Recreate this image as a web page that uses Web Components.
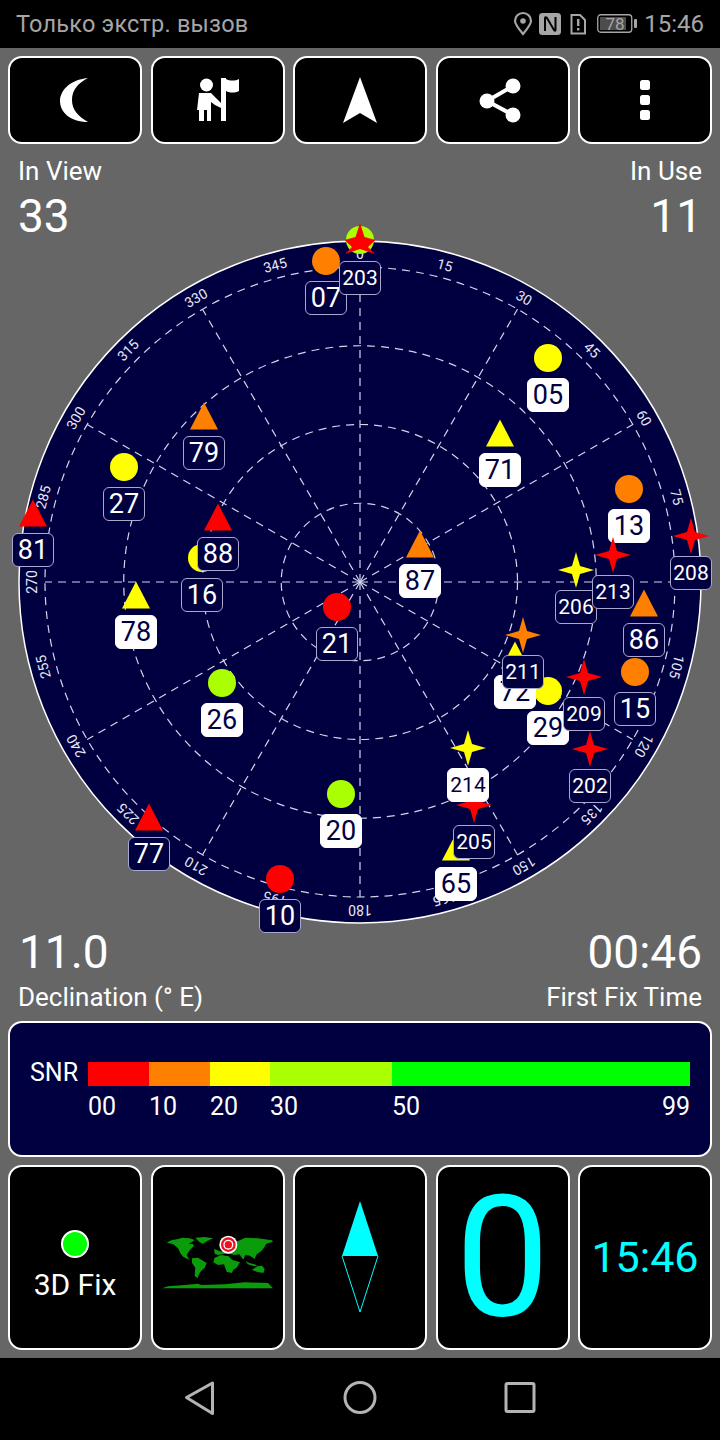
<!DOCTYPE html>
<html>
<head>
<meta charset="utf-8">
<title>GPS Test</title>
<style>
    html, body { margin: 0; padding: 0; background: #666; }
    body { width: 720px; height: 1440px; overflow: hidden; display: flex; flex-direction: column; font-family: Roboto, "Noto Sans", sans-serif; color: #fff; }
</style>
</head>
<body>
<status-bar></status-bar>
<tool-bar>
    <tool-button>
        <svg viewBox="0 0 134 88"><path fill="#fff" d="M80 22C60 24 52 36 52 45C52 56 62 66 80 66C70 60 64 54 64 44C64 34 70 27 80 22Z"/></svg>
    </tool-button>
    <tool-button>
        <svg viewBox="0 0 134 88"><circle cx="55.5" cy="29" r="6.5" fill="#fff"/><path fill="#fff" d="M48 37H60L66 43L70 47V52L64 49L60 46V65H56V54H53V65H48V54H46Z"/><path fill="#fff" d="M70 22H75V65H70ZM75 23C79 25 84 25 88 23V35C84 37 79 37 75 35Z"/></svg>
    </tool-button>
    <tool-button>
        <svg viewBox="0 0 134 88"><path fill="#fff" d="M67 21L84 67L67 57L50 67Z"/></svg>
    </tool-button>
    <tool-button>
        <svg viewBox="0 0 134 88"><path stroke="#fff" stroke-width="4" fill="none" d="M77 30L51 45L77 59"/><circle cx="51" cy="45" r="7.5" fill="#fff"/><circle cx="77" cy="30" r="7.5" fill="#fff"/><circle cx="77" cy="59" r="7.5" fill="#fff"/></svg>
    </tool-button>
    <tool-button>
        <svg viewBox="0 0 134 88"><rect x="62" y="24" width="10" height="10" rx="2.5" fill="#fff"/><rect x="62" y="39" width="10" height="10" rx="2.5" fill="#fff"/><rect x="62" y="54" width="10" height="10" rx="2.5" fill="#fff"/></svg>
    </tool-button>
</tool-bar>
<stat-row mode="top">
    <stat-block label="In View" value="33"></stat-block>
    <stat-block label="In Use" value="11" align="right"></stat-block>
</stat-row>
<sky-plot>
    <sat-marker shape="circle" color="#aaff00" x="360" y="0"></sat-marker>
    <sat-marker shape="circle" color="#ff8000" x="326" y="21" num="07"></sat-marker>
    <sat-marker shape="circle" color="#ffff00" x="548" y="118" num="05" used></sat-marker>
    <sat-marker shape="circle" color="#ffff00" x="124" y="227" num="27"></sat-marker>
    <sat-marker shape="circle" color="#ff8000" x="629" y="249" num="13" used></sat-marker>
    <sat-marker shape="circle" color="#ffff00" x="202" y="318" num="16"></sat-marker>
    <sat-marker shape="circle" color="#ff0000" x="337" y="367" num="21"></sat-marker>
    <sat-marker shape="circle" color="#aaff00" x="222" y="443" num="26" used></sat-marker>
    <sat-marker shape="circle" color="#ff8000" x="635" y="432" num="15"></sat-marker>
    <sat-marker shape="circle" color="#ffff00" x="548" y="451" num="29" used></sat-marker>
    <sat-marker shape="circle" color="#aaff00" x="341" y="554" num="20" used></sat-marker>
    <sat-marker shape="circle" color="#ff0000" x="280" y="639" num="10"></sat-marker>
    <sat-marker shape="triangle" color="#ff8000" x="204" y="176" num="79"></sat-marker>
    <sat-marker shape="triangle" color="#ff0000" x="33" y="273" num="81"></sat-marker>
    <sat-marker shape="triangle" color="#ff0000" x="218" y="277" num="88"></sat-marker>
    <sat-marker shape="triangle" color="#ffff00" x="136" y="355" num="78" used></sat-marker>
    <sat-marker shape="triangle" color="#ff0000" x="149" y="577" num="77"></sat-marker>
    <sat-marker shape="triangle" color="#ffff00" x="500" y="193" num="71" used></sat-marker>
    <sat-marker shape="triangle" color="#ff8000" x="420" y="304" num="87" used></sat-marker>
    <sat-marker shape="triangle" color="#ff8000" x="644" y="363" num="86"></sat-marker>
    <sat-marker shape="triangle" color="#ffff00" x="515" y="415" num="72" used></sat-marker>
    <sat-marker shape="triangle" color="#ffff00" x="456" y="607" num="65" used></sat-marker>
    <sat-marker shape="star4" color="#ff0000" x="691" y="296" num="208"></sat-marker>
    <sat-marker shape="star4" color="#ffff00" x="576" y="330" num="206"></sat-marker>
    <sat-marker shape="star4" color="#ff0000" x="613" y="315" num="213"></sat-marker>
    <sat-marker shape="star4" color="#ff8000" x="523" y="395" num="211"></sat-marker>
    <sat-marker shape="star4" color="#ff0000" x="584" y="437" num="209"></sat-marker>
    <sat-marker shape="star4" color="#ff0000" x="590" y="509" num="202"></sat-marker>
    <sat-marker shape="star4" color="#ff0000" x="474" y="565" num="205"></sat-marker>
    <sat-marker shape="star4" color="#ffff00" x="468" y="508" num="214" used></sat-marker>
    <sat-marker shape="star5" color="#ff0000" x="360" y="1" num="203"></sat-marker>
</sky-plot>
<stat-row mode="bottom">
    <stat-block label="Declination (° E)" value="11.0" flip></stat-block>
    <stat-block label="First Fix Time" value="00:46" align="right" flip></stat-block>
</stat-row>
<snr-legend></snr-legend>
<tile-row>
    <info-tile>
        <fix-status label="3D Fix"></fix-status>
    </info-tile>
    <info-tile>
        <svg width="120" height="66" viewBox="0 0 360 198" style="margin-top:8px">
            <g fill="#0a9c0a">
                <path d="M14 32L28 40L40 34L60 30L72 26L95 28L110 33L100 40L92 46L104 44L108 52L98 60L92 68L86 78L94 92L84 88L76 84L68 74L60 58L46 46L30 42Z"/>
                <path d="M112 26L140 24L165 28L148 36L135 44L125 40Z"/>
                <path d="M102 88L120 86L146 102L140 116L126 130L118 148L110 140L112 116L102 102Z"/>
                <path d="M170 86L190 78L212 82L222 92L246 100L236 116L226 122L222 132L206 128L198 106L180 108L166 100Z"/>
                <path d="M168 60L190 68L205 40L240 36L262 26L300 28L342 34L345 38L325 44L318 56L310 66L296 76L290 90L276 80L262 78L256 92L244 76L230 78L220 76L200 74L180 78L170 74Z"/>
                <path d="M282 122L298 112L312 110L320 120L316 132L296 128Z"/>
                <path d="M262 96L274 102L290 106L300 112L284 110L270 106Z"/>
                <path d="M12 178L30 172L80 168L120 164L130 168L200 166L260 160L330 162L345 178Z"/>
            </g>
            <circle cx="211" cy="47" r="27" fill="#fff"/>
            <circle cx="211" cy="47" r="22" fill="#f01020"/>
            <circle cx="211" cy="47" r="15" fill="#fff"/>
            <circle cx="211" cy="47" r="11" fill="#f01020"/>
        </svg>
    </info-tile>
    <info-tile>
        <svg width="38" height="114" viewBox="0 0 38 114" style="margin-top:-2px">
            <path fill="#00ffff" d="M19 1L37 56H1Z"/>
            <path fill="none" stroke="#00ffff" stroke-width="1" d="M1 56L19 112L37 56"/>
        </svg>
    </info-tile>
    <info-tile size="168"><span>0</span></info-tile>
    <info-tile size="43"><span>15:46</span></info-tile>
</tile-row>
<nav-bar></nav-bar>

<script>
class StatusBar extends HTMLElement {
    constructor() {
        super();
        this.attachShadow({ mode: 'open' });
        this.shadowRoot.innerHTML = `
            <style>
                :host { display: flex; align-items: center; height: 48px; background: #000; color: #a6a6a6; padding: 0 16px; box-sizing: border-box; flex: none; }
                .carrier { font-size: 23.5px; flex: 1; letter-spacing: 0.2px; }
                svg { display: block; }
                .time { font-size: 24px; margin-left: 6px; }
            </style>
            <span class="carrier">Только экстр. вызов</span>
            <svg width="22" height="26" viewBox="0 0 22 26" style="margin-right:5px">
                <path fill="none" stroke="#a6a6a6" stroke-width="2.2" d="M11 23C6 17 3 13 3 10A8 8 0 0 1 19 10C19 13 16 17 11 23Z"/>
                <circle cx="11" cy="10" r="2.8" fill="#a6a6a6"/>
            </svg>
            <svg width="22" height="22" viewBox="0 0 22 22" style="margin-right:8px">
                <rect width="22" height="22" rx="3.5" fill="#a6a6a6"/>
                <path fill="none" stroke="#000" stroke-width="2" d="M6 18V5C6 4 7 4 8 5L15 17C16 18 16.500 18 16.500 17V4"/>
            </svg>
            <svg width="17" height="21" viewBox="0 0 17 21" style="margin-right:11px">
                <path fill="none" stroke="#a6a6a6" stroke-width="2" d="M2.500 1H11L16 6V19.500H2.500Z"/>
                <rect x="8" y="5" width="2.400" height="7" fill="#a6a6a6"/><rect x="8" y="14" width="2.400" height="2.500" fill="#a6a6a6"/>
            </svg>
            <svg width="41" height="20" viewBox="0 0 41 20">
                <rect x=".75" y=".75" width="34" height="17.5" rx="3" fill="none" stroke="#a6a6a6" stroke-width="1.300"/>
                <rect x="3" y="3" width="26" height="13" fill="#4c4c4c"/>
                <rect x="37" y="5" width="3" height="9" rx="1" fill="#a6a6a6"/>
                <text x="18" y="15.500" font-size="17" text-anchor="middle" fill="#a6a6a6" font-family="Roboto">78</text>
            </svg>
            <span class="time">15:46</span>
        `;
    }
}

class ToolBar extends HTMLElement {
    constructor() {
        super();
        this.attachShadow({ mode: 'open' });
        this.shadowRoot.innerHTML = `
            <style>
                :host { display: grid; grid-template-columns: repeat(5, 134px); justify-content: space-between; padding: 8px 8px 0; flex: none; }
            </style>
            <slot></slot>
        `;
    }
}

class ToolButton extends HTMLElement {
    constructor() {
        super();
        this.attachShadow({ mode: 'open' });
        this.shadowRoot.innerHTML = `
            <style>
                :host { display: block; height: 88px; background: #000; border: 2px solid #fff; border-radius: 14px; box-sizing: border-box; overflow: hidden; }
                ::slotted(svg) { display: block; width: 134px; height: 88px; margin: -2px; }
            </style>
            <slot></slot>
        `;
    }
}

class StatRow extends HTMLElement {
    constructor() {
        super();
        this.attachShadow({ mode: 'open' });
        const bottom = this.getAttribute('mode') === 'bottom';
        this.shadowRoot.innerHTML = `
            <style>
                :host { display: flex; justify-content: space-between; padding: 0 18px; box-sizing: border-box; flex: none; height: ${bottom ? 97 : 96}px; padding-top: ${bottom ? 0 : 10}px; position: relative; z-index: 1; }
            </style>
            <slot></slot>
        `;
    }
}

class StatBlock extends HTMLElement {
    constructor() {
        super();
        this.attachShadow({ mode: 'open' });
        const right = this.getAttribute('align') === 'right';
        const flip = this.hasAttribute('flip');
        this.shadowRoot.innerHTML = `
            <style>
                :host { display: flex; flex-direction: ${flip ? 'column-reverse' : 'column'}; justify-content: ${flip ? 'flex-end' : 'flex-start'}; text-align: ${right ? 'right' : 'left'}; }
                .label { font-size: 26px; line-height: 34px; }
                .value { font-size: 46px; line-height: 56px; ${flip ? 'margin-left:1px;' : ''} }
            </style>
            <div class="label">${this.getAttribute('label')}</div>
            <div class="value">${this.getAttribute('value')}</div>
        `;
    }
}

class SkyPlot extends HTMLElement {
    constructor() {
        super();
        this.attachShadow({ mode: 'open' });
        const cx = 360, cy = 342;
        let grid = '';
        for (const r of [315, 236.25, 157.5, 78.75]) {
            grid += `<circle cx="${cx}" cy="${cy}" r="${r}" fill="none" class="dash"/>`;
        }
        for (let a = 0; a < 360; a += 30) {
            const t = a * Math.PI / 180;
            grid += `<line x1="${cx}" y1="${cy}" x2="${cx + 315 * Math.sin(t)}" y2="${cy - 315 * Math.cos(t)}" class="dash"/>`;
        }
        let ticks = '';
        for (let a = 0; a < 360; a += 15) {
            const t = a * Math.PI / 180;
            const x = cx + 328 * Math.sin(t);
            const y = cy - 328 * Math.cos(t);
            ticks += `<text x="${x}" y="${y}" transform="rotate(${a} ${x} ${y})" text-anchor="middle" dominant-baseline="central">${a}</text>`;
        }
        this.shadowRoot.innerHTML = `
            <style>
                :host { display: block; position: relative; width: 720px; height: 684px; flex: none; }
                svg { display: block; position: absolute; left: 0; top: 0; overflow: visible; }
                .dash { stroke: #d4d4ec; stroke-width: 1.2; stroke-dasharray: 8 6; }
                text { fill: #e8e8f4; font: 14px Roboto, sans-serif; }
            </style>
            <svg width="720" height="684">
                <circle cx="${cx}" cy="${cy}" r="341" fill="#000040" stroke="#fff" stroke-width="1.5"/>
                ${grid}
                ${ticks}
            </svg>
            <slot></slot>
        `;
    }
}

const SAT_SHAPES = {
    circle: (c) => `<circle r="14" fill="${c}"/>`,
    triangle: (c) => `<path d="M0 -13.500L14 13.500H-14Z" fill="${c}"/>`,
    star4: (c) => `<path d="M0 -18L4 -4L18 0L4 4L0 18L-4 4L-18 0L-4 -4Z" fill="${c}"/>`,
    star5: (c) => `<path d="M0 -18L4.500 -4L15.500 -1L8 6L15 13L0 8L-15 13L-8 6L-15.500 -1L-4.500 -4Z" fill="${c}"/>`
};

class SatMarker extends HTMLElement {
    constructor() {
        super();
        this.attachShadow({ mode: 'open' });
        const num = this.getAttribute('num');
        const used = this.hasAttribute('used');
        const shape = SAT_SHAPES[this.getAttribute('shape')](this.getAttribute('color'));
        this.shadowRoot.innerHTML = `
            <style>
                :host { display: block; position: absolute; left: ${this.getAttribute('x')}px; top: ${this.getAttribute('y')}px; width: 0; height: 0; }
                svg { position: absolute; left: -20px; top: -20px; }
                .label { position: absolute; left: -21px; top: 20px; width: 42px; height: 34px; box-sizing: border-box; display: flex; align-items: center; justify-content: center; border-radius: 6px; border: 1px solid ${used ? '#fff' : '#a9a9cf'}; background: ${used ? '#fff' : '#000040'}; color: ${used ? '#000040' : '#fff'}; font-size: ${num && num.length > 2 ? 21 : 27}px; }
            </style>
            <svg width="40" height="40" viewBox="-20 -20 40 40">${shape}</svg>
            ${num ? `<div class="label">${num}</div>` : ''}
        `;
    }
}

class SnrLegend extends HTMLElement {
    constructor() {
        super();
        this.attachShadow({ mode: 'open' });
        const bands = [
            ['#ff0000', 61, '00'], ['#ff8000', 61, '10'], ['#ffff00', 60, '20'],
            ['#aaff00', 122, '30'], ['#00ff00', 298, '50']
        ];
        this.shadowRoot.innerHTML = `
            <style>
                :host { display: flex; margin: 0 8px; height: 136px; box-sizing: border-box; background: #000040; border: 2px solid #fff; border-radius: 14px; padding: 32px 20px 0; flex: none; }
                .name { font-size: 25px; width: 58px; line-height: 36px; }
                .scale { width: 602px; }
                .bar { display: flex; height: 24px; margin-top: 7px; }
                .bar div { height: 100%; }
                .nums { display: flex; font-size: 25px; line-height: 42px; }
                .nums span { display: block; }
                .nums .last { flex: 1; }
                .end { margin-left: auto; }
            </style>
            <span class="name">SNR</span>
            <div class="scale">
                <div class="bar">${bands.map(b => `<div style="background:${b[0]};width:${b[1]}px"></div>`).join('')}</div>
                <div class="nums">
                    ${bands.slice(0, 4).map(b => `<span style="width:${b[1]}px">${b[2]}</span>`).join('')}
                    <span>50</span><span class="end">99</span>
                </div>
            </div>
        `;
    }
}

class TileRow extends HTMLElement {
    constructor() {
        super();
        this.attachShadow({ mode: 'open' });
        this.shadowRoot.innerHTML = `
            <style>
                :host { display: grid; grid-template-columns: repeat(5, 134px); justify-content: space-between; padding: 8px 8px 0; flex: none; }
            </style>
            <slot></slot>
        `;
    }
}

class InfoTile extends HTMLElement {
    constructor() {
        super();
        this.attachShadow({ mode: 'open' });
        this.shadowRoot.innerHTML = `
            <style>
                :host { display: flex; align-items: center; justify-content: center; height: 185px; background: #000; border: 2px solid #fff; border-radius: 14px; box-sizing: border-box; color: #00ffff; font-size: ${this.getAttribute('size') || 30}px; line-height: 1; overflow: hidden; }
            </style>
            <slot></slot>
        `;
    }
}

class FixStatus extends HTMLElement {
    constructor() {
        super();
        this.attachShadow({ mode: 'open' });
        this.shadowRoot.innerHTML = `
            <style>
                :host { display: flex; flex-direction: column; align-items: center; gap: 9px; color: #fff; font-size: 30px; line-height: 36px; margin-top: 18px; }
                .dot { width: 28px; height: 28px; box-sizing: border-box; border-radius: 50%; background: #00ff00; border: 2px solid #fff; }
            </style>
            <div class="dot"></div>
            <div>${this.getAttribute('label')}</div>
        `;
    }
}

class NavBar extends HTMLElement {
    constructor() {
        super();
        this.attachShadow({ mode: 'open' });
        this.shadowRoot.innerHTML = `
            <style>
                :host { display: block; height: 82px; background: #000; margin-top: 8px; flex: none; }
                svg { display: block; }
            </style>
            <svg width="720" height="82" viewBox="0 0 720 82">
                <g fill="none" stroke="#b4b4b4" stroke-width="3" stroke-linejoin="round">
                    <path d="M212.500 25V55.500L186.500 39.500Z"/>
                    <circle cx="360" cy="39.500" r="15"/>
                    <rect x="506" y="25.500" width="28" height="28" rx="1.500"/>
                </g>
            </svg>
        `;
    }
}

customElements.define('status-bar', StatusBar);
customElements.define('tool-bar', ToolBar);
customElements.define('tool-button', ToolButton);
customElements.define('stat-row', StatRow);
customElements.define('stat-block', StatBlock);
customElements.define('sky-plot', SkyPlot);
customElements.define('sat-marker', SatMarker);
customElements.define('snr-legend', SnrLegend);
customElements.define('tile-row', TileRow);
customElements.define('info-tile', InfoTile);
customElements.define('fix-status', FixStatus);
customElements.define('nav-bar', NavBar);
</script>
</body>
</html>
